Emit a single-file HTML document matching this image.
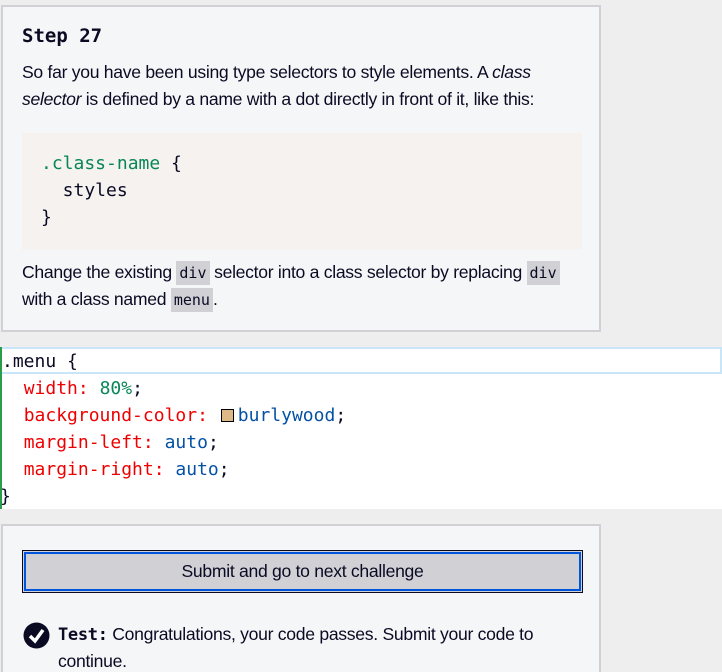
<!DOCTYPE html>
<html><head><meta charset="utf-8"><style>
*{margin:0;padding:0;box-sizing:border-box}
html,body{width:722px;height:672px;overflow:hidden}
body{background:#eeeeee;font-family:"Liberation Sans",sans-serif;color:#0a0a23;position:relative}
.panel{position:absolute;left:1px;width:600px;background:#f5f6f7;border:2px solid #d0d0d5}
#p1{top:5px;height:327px}
h1{position:absolute;left:19px;top:18px;font-family:"DejaVu Sans Mono",monospace;font-size:19px;font-weight:bold}
.t{position:absolute;left:19px;font-size:17.6px;line-height:27px;letter-spacing:-0.3px;white-space:nowrap}
.pre{position:absolute;left:19px;top:126px;width:560px;height:117px;background:#f5f2ef}
.m{font-family:"DejaVu Sans Mono",monospace}
.pre div{position:absolute;left:19px;font-family:"DejaVu Sans Mono",monospace;font-size:18px;white-space:pre}
code{font-family:"DejaVu Sans Mono",monospace;font-size:15px;background:#d0d0d5;padding:3px 3px;letter-spacing:0}
#ed{position:absolute;left:0;top:347px;width:722px;height:162px;background:#fff;border-left:2px solid #2a9d4a}
#ed .l{position:absolute;left:0;font-family:"DejaVu Sans Mono",monospace;font-size:18px;white-space:pre;height:27px;line-height:27px}
.hl{position:absolute;left:0;top:0;width:720px;height:27px;border:2px solid #c9e6f8;border-left:none}
.r{color:#e00}.g{color:#098658}.b{color:#0451a5}
#p2{top:524px;height:160px;border-bottom:none}
</style></head><body>
<div class="panel" id="p1">
<h1>Step 27</h1>
<div class="t" style="top:52px">So far you have been using type selectors to style elements. A <i>class</i></div>
<div class="t" style="top:79px"><i>selector</i> is defined by a name with a dot directly in front of it, like this:</div>
<div class="pre">
<div style="top:20px"><span style="color:#098658">.class-name</span> {</div>
<div style="top:47px">  styles</div>
<div style="top:74px">}</div>
</div>
<div class="t" style="top:252px">Change the existing <code>div</code> selector into a class selector by replacing <code>div</code></div>
<div class="t" style="top:279px">with a class named <code>menu</code>.</div>
</div>
<div id="ed">
<div class="hl"></div>
<div class="l" style="top:1px">.menu {</div>
<div class="l" style="top:28px">  <span class="r">width:</span> <span class="g">80%</span>;</div>
<div class="l" style="top:55px">  <span class="r">background-color:</span> <span style="display:inline-block;width:13px;height:13px;background:#deb887;border:1px solid #000;vertical-align:-1px;margin:0 4px 0 2px"></span><span class="b">burlywood</span>;</div>
<div class="l" style="top:82px">  <span class="r">margin-left:</span> <span class="b">auto</span>;</div>
<div class="l" style="top:109px">  <span class="r">margin-right:</span> <span class="b">auto</span>;</div>
<div class="l" style="top:136px;left:-2px">}</div>
</div>
<div class="panel" id="p2">
<div style="position:absolute;left:19px;top:24px;width:561px;height:43px;border:1px solid #0a0a23;background:#d0d0d5"><div style="position:absolute;inset:1px;border:2px solid #0055dd;text-align:center;line-height:35px;font-size:17.6px;letter-spacing:-0.3px">Submit and go to next challenge</div></div>
<svg style="position:absolute;left:20px;top:96px" width="27" height="27" viewBox="0 0 27 27"><circle cx="13.5" cy="13.5" r="13" fill="#0a0a23"/><path d="M7 14 L12 19 L20 8" stroke="#fff" stroke-width="3.5" fill="none"/></svg>
<div class="t" style="top:95px;left:55px"><b class="m" style="font-size:17px">Test:</b> Congratulations, your code passes. Submit your code to</div>
<div class="t" style="top:122px;left:55px">continue.</div>
</div>
</body></html>
